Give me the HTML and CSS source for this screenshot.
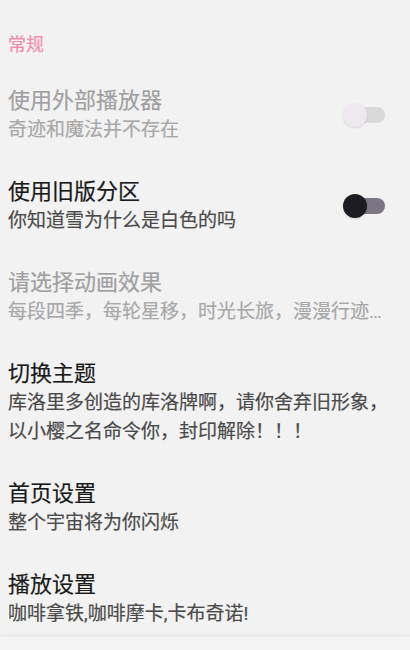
FILE: index.html
```html
<!DOCTYPE html>
<html lang="zh-CN">
<head>
  <meta charset="UTF-8">
  <meta name="viewport" content="width=device-width, initial-scale=1.0">
  <title>设置</title>
  <link rel="stylesheet" href="styles.css">
</head>
<body>
  <div class="screen">
    <div class="pref-list">
      <div class="pref-category">常规</div>

      <div class="pref-item disabled">
        <div class="pref-text">
          <div class="pref-title">使用外部播放器</div>
          <div class="pref-summary">奇迹和魔法并不存在</div>
        </div>
        <div class="switch">
          <span class="track"></span>
          <span class="thumb"></span>
        </div>
      </div>

      <div class="pref-item">
        <div class="pref-text">
          <div class="pref-title">使用旧版分区</div>
          <div class="pref-summary">你知道雪为什么是白色的吗</div>
        </div>
        <div class="switch on">
          <span class="track"></span>
          <span class="thumb"></span>
        </div>
      </div>

      <div class="pref-item disabled">
        <div class="pref-text">
          <div class="pref-title">请选择动画效果</div>
          <div class="pref-summary single">每段四季，每轮星移，时光长旅，漫漫行迹，风雨兼程</div>
        </div>
      </div>

      <div class="pref-item">
        <div class="pref-text">
          <div class="pref-title">切换主题</div>
          <div class="pref-summary">库洛里多创造的库洛牌啊，请你舍弃旧形象，以小樱之名命令你，封印解除！！！</div>
        </div>
      </div>

      <div class="pref-item">
        <div class="pref-text">
          <div class="pref-title">首页设置</div>
          <div class="pref-summary">整个宇宙将为你闪烁</div>
        </div>
      </div>

      <div class="pref-item">
        <div class="pref-text">
          <div class="pref-title">播放设置</div>
          <div class="pref-summary">咖啡拿铁,咖啡摩卡,卡布奇诺!</div>
        </div>
      </div>
    </div>

    <div class="bottom-bar"></div>
  </div>
</body>
</html>
```

FILE: styles.css
```css
body {
  margin: 0;
  font-family: Roboto, "Noto Sans CJK SC", sans-serif;
  background-color: #f2f2f2;
  color: #1a1a1a;
}

.screen {
  display: flex;
  flex-direction: column;
  height: 100vh;
  overflow: hidden;
}

.pref-list {
  flex: 1;
  overflow: hidden;
  padding-top: 33px;
}

.pref-category {
  padding: 0 8px;
  font-size: 18px;
  line-height: 24px;
  color: #f38bae; /* pink accent */
  margin-bottom: 12px;
  -webkit-text-stroke: 0.2px currentColor;
}

.pref-item {
  display: flex;
  align-items: center;
  padding: 17px 16px 16px 8px;
}

.pref-text {
  flex: 1;
  min-width: 0;
}

.pref-title {
  font-size: 22px;
  line-height: 29px;
  color: #1a1a1a;
  -webkit-text-stroke: 0.2px currentColor;
}

.pref-summary {
  font-size: 19px;
  line-height: 29px;
  color: #4a4a4a;
  -webkit-text-stroke: 0.2px currentColor;
}

.pref-summary.single {
  white-space: nowrap;
  overflow: hidden;
  text-overflow: ellipsis;
}

.disabled .pref-title {
  color: #a0a0a0;
}

.disabled .pref-summary {
  color: #a8a8a8;
}

/* switch: track with the thumb laid over it */
.switch {
  position: relative;
  width: 44px;
  height: 24px;
  margin-right: 7px;
  flex-shrink: 0;
}

.switch .track {
  position: absolute;
  left: 6px;
  top: 4px;
  width: 36px;
  height: 16px;
  border-radius: 8px;
  background-color: #d9d9d9;
}

.switch .thumb {
  position: absolute;
  left: 0;
  top: 0;
  width: 24px;
  height: 24px;
  border-radius: 50%;
  background-color: #ede9ef;
  box-shadow: 0 1px 2px rgba(0, 0, 0, 0.12);
}

.switch.on .track {
  background-color: #7b7681;
}

.switch.on .thumb {
  background-color: #1d1c21;
}

.bottom-bar {
  height: 13px;
  background-color: #f4f4f4;
  box-shadow: 0 -2px 3px rgba(0, 0, 0, 0.05);
}
```
